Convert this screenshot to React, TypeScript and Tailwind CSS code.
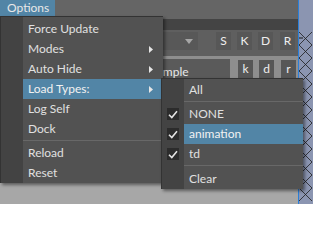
import React from 'react';

const font = "font-['Lato','Liberation_Sans',sans-serif]";

const Arrow = () => (
  <svg width="4" height="7" viewBox="0 0 4 7" className="shrink-0">
    <path d="M0 0L4 3.5L0 7Z" fill="#e6e6e6" />
  </svg>
);

const Check = () => (
  <div className="w-[12px] h-[12px] bg-[#2c2c2c] flex items-center justify-center">
    <svg width="10" height="9" viewBox="0 0 10 9">
      <path d="M1 4.8L3.8 7.6L9 1.2" fill="none" stroke="#e4e4e4" strokeWidth="1.6" />
    </svg>
  </div>
);

type Item = { label: string; arrow?: boolean; active?: boolean; checked?: boolean; sep?: number };

const mainItems: Item[] = [
  { label: 'Force Update' },
  { label: 'Modes', arrow: true },
  { label: 'Auto Hide', arrow: true },
  { label: 'Load Types:', arrow: true, active: true },
  { label: 'Log Self' },
  { label: 'Dock' },
  { label: '', sep: 4 },
  { label: 'Reload' },
  { label: 'Reset' },
];

const subItems: Item[] = [
  { label: 'All' },
  { label: '', sep: 4 },
  { label: 'NONE', checked: true },
  { label: 'animation', checked: true, active: true },
  { label: 'td', checked: true },
  { label: '', sep: 5 },
  { label: 'Clear' },
];

const MenuRows: React.FC<{ items: Item[] }> = ({ items }) => (
  <>
    {items.map((it, i) =>
      it.sep ? (
        <div key={i} className="flex" style={{ height: it.sep }}>
          <div className="w-[22px] bg-[#434343]" />
          <div className="flex-1 pt-[1px]">
            <div className="h-[1px] bg-[#686868]" />
          </div>
        </div>
      ) : (
        <div key={i} className="flex h-[20px]">
          <div className="w-[22px] bg-[#434343] flex items-center justify-center">
            {it.checked && <Check />}
          </div>
          <div
            className={`flex-1 flex items-center justify-between pl-[5px] pr-[10px] ${
              it.active ? 'bg-[#5285a6] text-[#f2f2f2]' : 'text-[#e0e0e0]'
            }`}
          >
            <span>{it.label}</span>
            {it.arrow && <Arrow />}
          </div>
        </div>
      )
    )}
  </>
);

const Btn: React.FC<{ label: string; className?: string }> = ({ label, className }) => (
  <div
    className={`w-[15px] h-[18px] bg-[#575757] text-[#eeeeee] flex items-center justify-center ${className ?? ''}`}
  >
    {label}
  </div>
);

export default function App() {
  return (
    <div
      className={`relative w-[313px] h-[204px] overflow-hidden bg-[#a7a7a7] text-[12px] leading-none ${font}`}
    >
      <div className="flex h-full">
        <div className="w-[298px] flex flex-col bg-[#a7a7a7]">
          <div className="h-[19px] bg-[#656565] flex items-start">
            <div className="h-[16px] w-[55px] pl-[7px] bg-[#5285a6] text-[#e8e8e8] flex items-center">
              Options
            </div>
          </div>
          <div className="h-[11px] bg-[#444444]" />
          <div className="h-[26px] bg-[#5f5f5f] flex items-start pt-[2px]">
            <div className="ml-[100px] w-[98px] h-[18px] bg-[#585858] flex items-center justify-end pr-[5px]">
              <svg width="8" height="5" viewBox="0 0 8 5">
                <path d="M0 0H8L4 5Z" fill="#a6a6a6" />
              </svg>
            </div>
            <Btn label="S" className="ml-[18px]" />
            <Btn label="K" className="ml-[6px]" />
            <Btn label="D" className="ml-[6px]" />
            <Btn label="R" className="ml-[7px]" />
          </div>
          <div className="h-[24px] bg-[#8e8e8e] flex items-start">
            <div className="ml-[100px] w-[130px] h-[21px] mt-[3px] bg-[#5a5a5a] text-[#e8e8e8] flex items-center pl-[44px] pt-[4px]">
              Example
            </div>
            <div className="ml-[8px] mt-[4px] flex">
              <Btn label="k" className="h-[17px]" />
              <Btn label="d" className="h-[17px] ml-[6px]" />
              <Btn label="r" className="h-[17px] ml-[7px]" />
            </div>
          </div>
          <div className="flex-1 bg-[#a7a7a7]" />
        </div>
        <div className="w-[1px] bg-[#2a7fd8]" />
        <div className="flex-1 bg-[#8b95b1]">
          <svg width="14" height="204" viewBox="0 0 14 204">
            <path d="M0 38H4" stroke="#1a1a1a" strokeWidth="1" />
            <polyline
              points="0,32 13,45 0,58 13,71 0,84 13,97 0,110 13,123 0,136 13,149 0,162 13,175 0,188 13,201"
              fill="none"
              stroke="#1e1e1e"
              strokeWidth="0.8"
            />
            <polyline
              points="13,32 0,45 13,58 0,71 13,84 0,97 13,110 0,123 13,136 0,149 13,162 0,175 13,188 0,201"
              fill="none"
              stroke="#1e1e1e"
              strokeWidth="0.8"
            />
          </svg>
        </div>
      </div>

      <div className="absolute left-0 top-[16px] w-[163px] h-[167px] bg-[#525252] border-t border-l border-[#333333] shadow-[2px_2px_3px_rgba(0,0,0,0.45)] flex flex-col">
        <div className="h-[2px] flex">
          <div className="w-[22px] bg-[#434343]" />
        </div>
        <MenuRows items={mainItems} />
      </div>

      <div className="absolute left-[161px] top-[78px] w-[142px] h-[111px] bg-[#525252] border-t border-l border-[#333333] shadow-[2px_2px_3px_rgba(0,0,0,0.45)] flex flex-col">
        <div className="h-[1px] flex">
          <div className="w-[22px] bg-[#434343]" />
        </div>
        <MenuRows items={subItems} />
      </div>
    </div>
  );
}
